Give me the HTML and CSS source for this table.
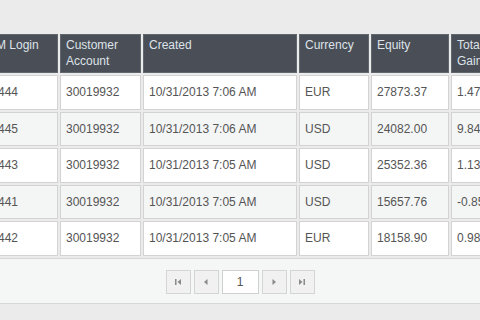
FILE: index.html
```html
<!DOCTYPE html>
<html>
<head>
<meta charset="utf-8">
<link rel="stylesheet" href="styles.css">
</head>
<body>
<div class="grid">
  <div class="scroller">
    <table class="data">
      <colgroup>
        <col class="c-login"><col class="c-acct"><col class="c-created"><col class="c-cur"><col class="c-eq"><col class="c-gain">
      </colgroup>
      <thead>
        <tr><th>MAM Login</th><th>Customer Account</th><th>Created</th><th>Currency</th><th>Equity</th><th class="nw">Total<br>Gain (%)</th></tr>
      </thead>
      <tbody>
        <tr><td>100444</td><td>30019932</td><td>10/31/2013 7:06 AM</td><td>EUR</td><td>27873.37</td><td>1.47</td></tr>
        <tr class="alt"><td>100445</td><td>30019932</td><td>10/31/2013 7:06 AM</td><td>USD</td><td>24082.00</td><td>9.84</td></tr>
        <tr><td>100443</td><td>30019932</td><td>10/31/2013 7:05 AM</td><td>USD</td><td>25352.36</td><td>1.13</td></tr>
        <tr class="alt"><td>100441</td><td>30019932</td><td>10/31/2013 7:05 AM</td><td>USD</td><td>15657.76</td><td>-0.85</td></tr>
        <tr><td>100442</td><td>30019932</td><td>10/31/2013 7:05 AM</td><td>EUR</td><td>18158.90</td><td>0.98</td></tr>
      </tbody>
    </table>
  </div>
  <div class="pager">
    <span class="pbtn"><svg width="8" height="8" viewBox="0 0 8 8"><rect x="1" y="1" width="1.5" height="6" fill="#8a8a8a"/><path d="M7 1 L3.5 4 L7 7 Z" fill="#8a8a8a"/></svg></span>
    <span class="pbtn"><svg width="8" height="8" viewBox="0 0 8 8"><path d="M5.5 1 L2 4 L5.5 7 Z" fill="#8a8a8a"/></svg></span>
    <span class="pinput">1</span>
    <span class="pbtn"><svg width="8" height="8" viewBox="0 0 8 8"><path d="M2.5 1 L6 4 L2.5 7 Z" fill="#8a8a8a"/></svg></span>
    <span class="pbtn"><svg width="8" height="8" viewBox="0 0 8 8"><path d="M1 1 L4.5 4 L1 7 Z" fill="#8a8a8a"/><rect x="5.5" y="1" width="1.5" height="6" fill="#8a8a8a"/></svg></span>
  </div>
</div>
</body>
</html>
```

FILE: styles.css
```css
html, body {
  margin: 0;
  padding: 0;
  background: #ebebeb;
  width: 480px;
  height: 320px;
  overflow: hidden;
  font-family: "Liberation Sans", Arial, sans-serif;
  font-size: 12px;
}
.grid {
  padding-top: 32px;
}
.scroller {
  overflow: hidden;
  width: 480px;
}
.data {
  table-layout: fixed;
  width: 553px;
  margin-left: -30px;
  border-collapse: separate;
  border-spacing: 2px;
}
.c-login { width: 86px; }
.c-acct { width: 81px; }
.c-created { width: 154px; }
.c-cur { width: 70px; }
.c-eq { width: 78px; }
.c-gain { width: 70px; }
.data th {
  background: #4a4e56;
  border: 1px solid #62666d;
  color: #dde3ea;
  font-weight: normal;
  text-align: left;
  vertical-align: top;
  line-height: 16px;
  padding: 2px 5px 3px;
  height: 32px;
  box-sizing: content-box;
  white-space: normal;
}
.data th.nw {
  white-space: nowrap;
}
.data td {
  background: #ffffff;
  border: 1px solid #d3d3d3;
  color: #555;
  line-height: 16px;
  padding: 8px 5px 8.5px;
  white-space: nowrap;
  overflow: hidden;
}
.data tr.alt td {
  background: #f4f5f5;
}
.pager {
  background: #f5f6f6;
  border-top: 1px solid #d6d6d6;
  border-bottom: 1px solid #d6d6d6;
  padding: 11px 0 9px;
  display: flex;
  justify-content: center;
  gap: 3px;
}
.pbtn {
  width: 23px;
  height: 22px;
  border: 1px solid #d5d5d5;
  background: #f1f1f1;
  display: flex;
  align-items: center;
  justify-content: center;
}
.pinput {
  width: 35px;
  height: 22px;
  border: 1px solid #d0d0d0;
  background: #fff;
  color: #555;
  display: flex;
  align-items: center;
  justify-content: center;
  line-height: 16px;
}
```
